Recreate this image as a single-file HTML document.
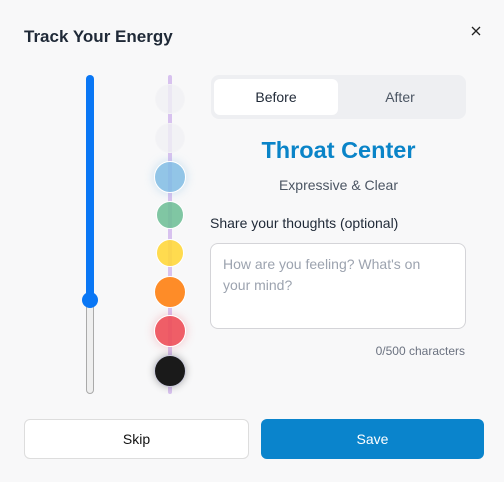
<!DOCTYPE html>
<html><head><style>
*{margin:0;padding:0;box-sizing:border-box}
body{width:504px;height:482px;background:#f8f8f9;font-family:"Liberation Sans",sans-serif;position:relative;overflow:hidden;color:#1f2937}
.a{position:absolute}
.c{position:absolute;border-radius:50%;border:1.5px solid #fff;transform:translate(-50%,-50%)}
</style></head><body>
<div class="a" style="left:24px;top:27px;font-size:17px;font-weight:bold;color:#1f2937">Track Your Energy</div>
<svg class="a" style="left:471px;top:26px" width="10" height="10"><path d="M1 1L9 9M9 1L1 9" stroke="#222" stroke-width="1.3"/></svg>

<div class="a" style="left:86px;top:300px;width:8px;height:94px;background:#efefef;border:1px solid #aaa;border-radius:4px"></div>
<div class="a" style="left:86px;top:75px;width:8px;height:228px;background:#0a77f5;border-radius:4px"></div>
<div class="a" style="left:82px;top:292px;width:16px;height:16px;background:#0a77f5;border-radius:50%"></div>

<div class="a" style="left:168px;top:75px;width:4px;height:319px;background:#d8c2ef;border-radius:2px"></div>
<div class="c" style="left:170px;top:99px;width:30px;height:30px;background:rgba(240,240,244,.8);border-color:#f4f4f6"></div>
<div class="c" style="left:170px;top:138px;width:30px;height:30px;background:rgba(240,240,244,.8);border-color:#f4f4f6"></div>
<div class="c" style="left:170px;top:177px;width:32px;height:32px;background:rgba(128,188,228,.85);box-shadow:0 0 10px rgba(128,188,228,.4)"></div>
<div class="c" style="left:170px;top:215px;width:28px;height:28px;background:rgba(110,190,150,.88)"></div>
<div class="c" style="left:170px;top:253px;width:28px;height:28px;background:rgba(255,215,60,.9)"></div>
<div class="c" style="left:170px;top:292px;width:32px;height:32px;background:#fe8c28"></div>
<div class="c" style="left:170px;top:331px;width:32px;height:32px;background:rgba(238,80,90,.92);box-shadow:0 0 10px rgba(238,80,90,.3)"></div>
<div class="c" style="left:170px;top:371px;width:32px;height:32px;background:#1a1a1a;border-color:#ccd;box-shadow:0 0 8px rgba(0,0,0,.3)"></div>

<div class="a" style="left:211px;top:75px;width:255px;height:44px;background:#eeeff2;border-radius:8px"></div>
<div class="a" style="left:214px;top:79px;width:124px;height:36px;background:#fff;border-radius:6px;font-size:14px;line-height:36px;text-align:center;color:#1f2937">Before</div>
<div class="a" style="left:338px;top:79px;width:124px;height:36px;font-size:14px;line-height:36px;text-align:center;color:#4b5563">After</div>
<div class="a" style="left:211px;top:137px;width:255px;text-align:center;font-size:23.5px;font-weight:bold;color:#0a84c8">Throat Center</div>
<div class="a" style="left:211px;top:177px;width:255px;text-align:center;font-size:14px;color:#4b5563">Expressive &amp; Clear</div>
<div class="a" style="left:210px;top:215px;font-size:14px;color:#1f2937">Share your thoughts (optional)</div>
<div class="a" style="left:210px;top:243px;width:256px;height:86px;background:#fff;border:1px solid #d4d4d8;border-radius:8px;padding:10px 30px 10px 12px;font-size:14px;line-height:21px;color:#9ca3af">How are you feeling? What's on your mind?</div>
<div class="a" style="left:210px;top:344px;width:255px;text-align:right;font-size:12px;color:#6b7280">0/500 characters</div>

<div class="a" style="left:24px;top:419px;width:225px;height:40px;background:#fff;border:1px solid #ddd;border-radius:6px;text-align:center;line-height:38px;font-size:14px;color:#111">Skip</div>
<div class="a" style="left:261px;top:419px;width:223px;height:40px;background:#0a84cc;border-radius:6px;text-align:center;line-height:40px;font-size:14px;color:#fff">Save</div>
</body></html>
